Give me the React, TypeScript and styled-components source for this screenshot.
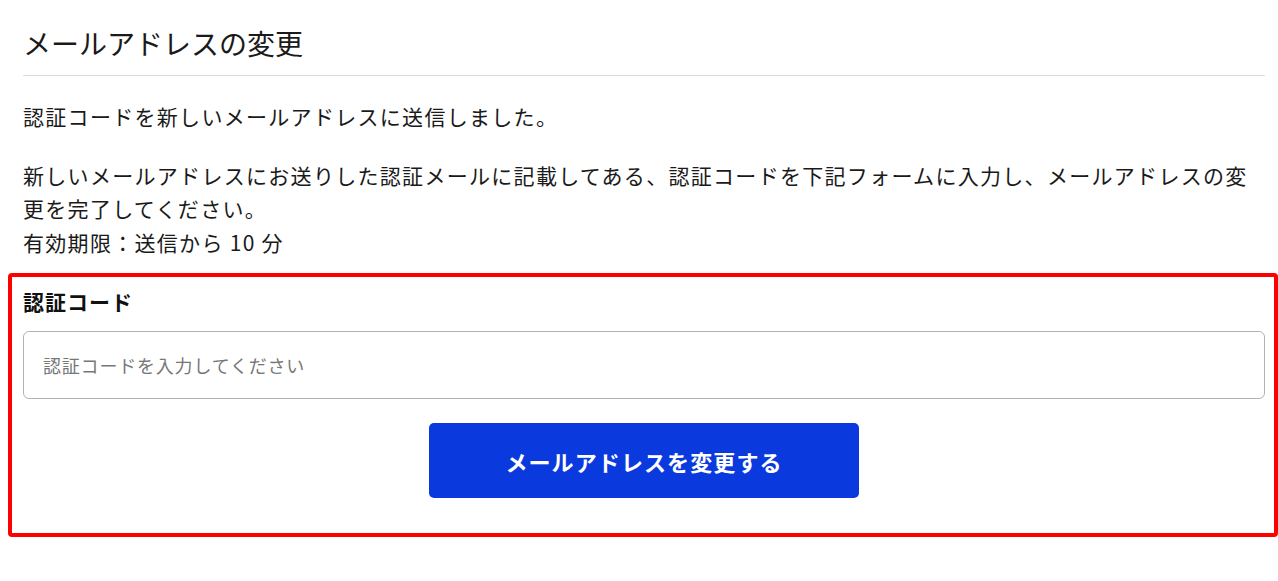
import React from "react";
import styled, { createGlobalStyle } from "styled-components";

const GlobalStyle = createGlobalStyle`
  html, body {
    margin: 0;
    padding: 0;
    background: #ffffff;
    overflow: hidden;
  }

  body {
    font-family: "Noto Sans CJK JP", "Noto Sans", sans-serif;
    color: #1a1a1a;
  }
`;

const App: React.FunctionComponent = () => {
  return (
    <>
      <GlobalStyle />
      <Root>
        <Title>メールアドレスの変更</Title>
        <Message>認証コードを新しいメールアドレスに送信しました。</Message>
        <Notice>
          新しいメールアドレスにお送りした認証メールに記載してある、認証コードを下記フォームに入力し、メールアドレスの変更を完了してください。
          <br />
          有効期限：送信から 10 分
        </Notice>
        <Highlight>
          <Label htmlFor="code">認証コード</Label>
          <Input id="code" type="text" placeholder="認証コードを入力してください" />
          <Actions>
            <Submit type="button">メールアドレスを変更する</Submit>
          </Actions>
        </Highlight>
      </Root>
    </>
  );
};

export default App;

const Root = styled.main`
  width: 1242px;
  padding: 0 0 0 23px;
`;

const Title = styled.h1`
  margin: 0;
  padding: 23px 0 12px;
  font-size: 28px;
  line-height: 40px;
  font-weight: 400;
  color: #1a1a1a;
  border-bottom: 1px solid #dcdcdc;
`;

const Message = styled.p`
  margin: 24px 0 0;
  font-size: 21px;
  line-height: 33.5px;
  letter-spacing: 1.3px;
`;

const Notice = styled(Message)`
  margin-top: 25px;
`;

const Highlight = styled.section`
  display: flex;
  flex-direction: column;
  margin: 14px -13px 0 -15px;
  padding: 10px 9px 35px 11px;
  border: 4px solid #ff0000;
  border-radius: 4px;
`;

const Label = styled.label`
  font-size: 21px;
  line-height: 28px;
  font-weight: 700;
  letter-spacing: 1px;
  color: #111111;
`;

const Input = styled.input`
  box-sizing: border-box;
  margin-top: 16px;
  width: 100%;
  height: 68px;
  padding: 0 19px;
  border: 1px solid #b3b3b3;
  border-radius: 6px;
  font-family: "Noto Sans CJK JP", "Noto Sans", sans-serif;
  font-size: 18px;
  letter-spacing: 0.8px;
  color: #1a1a1a;
  outline: none;

  &::placeholder {
    color: #777777;
  }
`;

const Actions = styled.div`
  display: flex;
  justify-content: center;
  margin-top: 24px;
`;

const Submit = styled.button`
  width: 430px;
  height: 75px;
  border: none;
  border-radius: 5px;
  background: #0a3ade;
  color: #ffffff;
  font-family: "Noto Sans CJK JP", "Noto Sans", sans-serif;
  font-size: 22px;
  font-weight: 700;
  letter-spacing: 1.1px;
  cursor: pointer;
`;
